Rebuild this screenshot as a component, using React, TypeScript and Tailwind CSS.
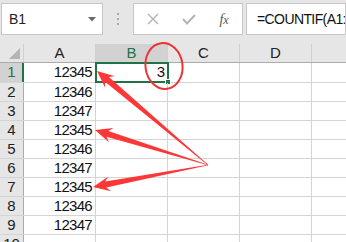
import React from "react";

const FONT = '"Liberation Sans", Arial, sans-serif';

const cols = ["A", "B", "C", "D"];
const values = ["12345", "12346", "12347", "12345", "12346", "12347", "12345", "12346", "12347"];

function arrowPoints(x0: number, y0: number, x1: number, y1: number) {
  const dx = x1 - x0;
  const dy = y1 - y0;
  const len = Math.hypot(dx, dy);
  const ux = dx / len;
  const uy = dy / len;
  const nx = -uy;
  const ny = ux;
  const H = 17;
  const bx = x1 - ux * H;
  const by = y1 - uy * H;
  const bx2 = x1 - ux * (H - 4);
  const by2 = y1 - uy * (H - 4);
  const pts: [number, number][] = [
    [x0 + nx * 0.3, y0 + ny * 0.3],
    [bx2 + nx * 3, by2 + ny * 3],
    [bx + nx * 7.5, by + ny * 7.5],
    [x1, y1],
    [bx - nx * 7.5, by - ny * 7.5],
    [bx2 - nx * 3, by2 - ny * 3],
    [x0 - nx * 0.3, y0 - ny * 0.3],
  ];
  return pts.map((p) => `${p[0].toFixed(1)},${p[1].toFixed(1)}`).join(" ");
}

function HeaderCell({ label, active }: { label: string; active?: boolean }) {
  return (
    <div
      className={`w-[72px] h-full shrink-0 flex items-center justify-center border-r border-[#d0d0d0] text-[15px] ${
        active ? "bg-[#d2d2d2] text-[#217346]" : "bg-[#e6e6e6] text-[#222]"
      }`}
    >
      {label}
    </div>
  );
}

export default function App() {
  return (
    <div
      className="relative w-[346px] h-[242px] overflow-hidden bg-white"
      style={{ fontFamily: FONT }}
    >
      {/* Toolbar */}
      <div className="h-[44px] bg-[#e6e6e6] flex items-start pt-[3px]">
        <div className="ml-[1px] w-[102px] h-[32px] bg-white border border-[#c6c6c6] flex items-center justify-between pl-[7px] pr-[6px]">
          <span className="text-[14px] text-[#222]">B1</span>
          <svg width="8" height="5" viewBox="0 0 8 5">
            <path d="M0 0 L8 0 L4 4.5 Z" fill="#6a6a6a" />
          </svg>
        </div>
        <div className="w-[30px] h-[32px] flex flex-col items-center justify-center gap-[3px]">
          <div className="w-[2px] h-[2px] bg-[#a8a8a8]" />
          <div className="w-[2px] h-[2px] bg-[#a8a8a8]" />
          <div className="w-[2px] h-[2px] bg-[#a8a8a8]" />
        </div>
        <div className="w-[110px] h-[32px] bg-white border border-[#c6c6c6] flex items-center">
          <div className="w-[38px] flex justify-center">
            <svg width="12" height="12" viewBox="0 0 12 12">
              <path d="M1 1 L11 11 M11 1 L1 11" stroke="#b4b4b4" strokeWidth="1.4" />
            </svg>
          </div>
          <div className="w-[34px] flex justify-center">
            <svg width="14" height="11" viewBox="0 0 14 11">
              <path d="M1 5 L5 9.5 L13 1" stroke="#b4b4b4" strokeWidth="2" fill="none" />
            </svg>
          </div>
          <div className="w-[36px] flex justify-center">
            <span
              className="italic text-[14px] text-[#555]"
              style={{ fontFamily: '"Liberation Serif", serif' }}
            >
              f<span className="text-[12px]">x</span>
            </span>
          </div>
        </div>
        <div className="ml-[3px] flex-1 h-[32px] bg-white border border-[#c6c6c6] flex items-center pl-[10px] overflow-hidden whitespace-nowrap">
          <span className="text-[14px] tracking-[-0.6px] text-[#111]">=COUNTIF(A1:A9,A1)</span>
        </div>
      </div>

      {/* Column headers */}
      <div className="h-[19px] flex border-b border-[#ababab] bg-[#e6e6e6]">
        <div className="w-[24px] h-full shrink-0 border-r border-[#d0d0d0] relative">
          <svg className="absolute right-[3px] bottom-[3px]" width="11" height="11" viewBox="0 0 11 11">
            <path d="M11 0 L11 11 L0 11 Z" fill="#b4b4b4" />
          </svg>
        </div>
        {cols.map((c) => (
          <HeaderCell key={c} label={c} active={c === "B"} />
        ))}
        <div className="flex-1 h-full bg-[#e6e6e6]" />
      </div>

      {/* Rows */}
      {values.map((v, i) => (
        <div
          key={i}
          className={`${i === 0 ? "h-[20px]" : "h-[19px]"} flex border-b border-[#d4d4d4]`}
        >
          <div
            className={`w-[24px] h-full shrink-0 flex items-center justify-center text-[15px] border-r ${
              i === 0
                ? "bg-[#d2d2d2] text-[#217346] border-r-2 border-[#217346]"
                : "bg-[#e6e6e6] text-[#222] border-[#ababab]"
            }`}
          >
            <span className={i === 0 ? "ml-[1px]" : ""}>{i + 1}</span>
          </div>
          <div className="w-[72px] h-full shrink-0 flex items-center justify-end pr-[3px] border-r border-[#d4d4d4] text-[15px] text-[#111] tracking-[-0.7px]">
            {v}
          </div>
          <div className="w-[72px] h-full shrink-0 relative flex items-center justify-end pr-[2px] border-r border-[#d4d4d4] text-[15px] text-[#111]">
            {i === 0 ? "3" : ""}
            {i === 0 && (
              <div className="absolute left-[-1px] top-[-1px] w-[74px] h-[21px] border-2 border-[#217346]">
                <div className="absolute right-[-4px] bottom-[-4px] w-[6px] h-[6px] bg-[#217346] border border-white" />
              </div>
            )}
          </div>
          <div className="w-[72px] h-full shrink-0 border-r border-[#d4d4d4]" />
          <div className="w-[72px] h-full shrink-0 border-r border-[#d4d4d4]" />
          <div className="flex-1 h-full" />
        </div>
      ))}
      <div className="h-[19px] flex border-b border-[#d4d4d4]">
        <div className="w-[24px] h-full shrink-0 flex items-center justify-center text-[15px] bg-[#e6e6e6] text-[#222] border-r border-[#ababab]">
          10
        </div>
        <div className="w-[72px] h-full shrink-0 border-r border-[#d4d4d4]" />
        <div className="w-[72px] h-full shrink-0 border-r border-[#d4d4d4]" />
        <div className="w-[72px] h-full shrink-0 border-r border-[#d4d4d4]" />
        <div className="w-[72px] h-full shrink-0 border-r border-[#d4d4d4]" />
      </div>

      {/* Annotations */}
      <svg
        className="absolute left-0 top-0 pointer-events-none"
        width="346"
        height="242"
        viewBox="0 0 346 242"
      >
        <ellipse
          cx="164"
          cy="66"
          rx="18.5"
          ry="23"
          fill="none"
          stroke="#ee3535"
          strokeWidth="2"
          transform="rotate(-8 164 66)"
        />
        <polygon points={arrowPoints(208, 165, 97, 71)} fill="#fd3737" />
        <polygon points={arrowPoints(208, 165, 95, 130)} fill="#fd3737" />
        <polygon points={arrowPoints(208, 165, 93, 187)} fill="#fd3737" />
      </svg>
    </div>
  );
}
